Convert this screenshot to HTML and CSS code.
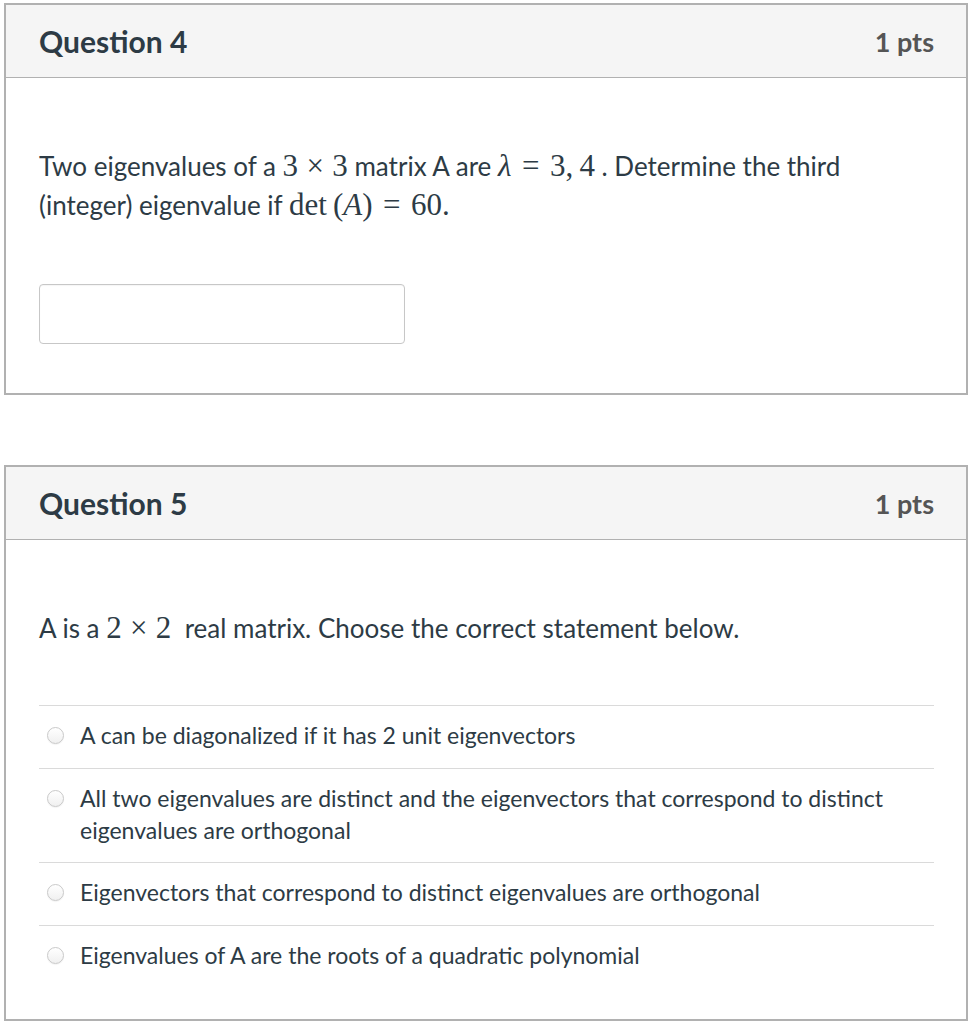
FILE: index.html
```html
<!DOCTYPE html>
<html>
<head>
<meta charset="utf-8">
<link rel="stylesheet" href="styles.css">
</head>
<body>
<div class="page">
  <div class="card">
    <div class="card-header">
      <h2 class="q-title">Question 4</h2>
      <span class="q-pts">1 pts</span>
    </div>
    <div class="card-body">
      <p class="q-text">Two eigenvalues of a <span class="math">3<span class="bin">×</span>3</span> matrix A are <span class="math"><i>λ</i><span class="rel">=</span>3,<span class="thin"></span>4</span> . Determine the third (integer) eigenvalue if <span class="math">det<span class="thin"></span>(<i>A</i>)<span class="rel">=</span>60.</span></p>
      <input class="answer" type="text">
    </div>
  </div>

  <div class="card card-second">
    <div class="card-header">
      <h2 class="q-title">Question 5</h2>
      <span class="q-pts">1 pts</span>
    </div>
    <div class="card-body card-body-mc">
      <p class="q-text">A is a <span class="math">2<span class="bin">×</span>2</span>&nbsp; real matrix. Choose the correct statement below.</p>
      <div class="answers">
        <label class="answer-row"><span class="radio"></span><span class="answer-text">A can be diagonalized if it has 2 unit eigenvectors</span></label>
        <label class="answer-row"><span class="radio"></span><span class="answer-text">All two eigenvalues are distinct and the eigenvectors that correspond to distinct eigenvalues are orthogonal</span></label>
        <label class="answer-row"><span class="radio"></span><span class="answer-text">Eigenvectors that correspond to distinct eigenvalues are orthogonal</span></label>
        <label class="answer-row"><span class="radio"></span><span class="answer-text">Eigenvalues of A are the roots of a quadratic polynomial</span></label>
      </div>
    </div>
  </div>
</div>
</body>
</html>
```

FILE: styles.css
```css
* { box-sizing: border-box; }
html, body { margin: 0; padding: 0; background: #fff; }
body { font-family: Lato, "Open Sans", sans-serif; color: #2d3b45; }

.page { padding: 3px 5px 0 4px; }

.card {
  border: 2px solid #b1b1b1;
  background: #fff;
}
.card-second { margin-top: 70px; }

.card-header {
  height: 73px;
  background: #f5f5f5;
  border-bottom: 1px solid #b1b1b1;
  display: flex;
  align-items: center;
  justify-content: space-between;
  padding: 0 32px 0 33px;
}
.q-title {
  margin: 0;
  font-size: 30px;
  font-weight: 700;
  color: #2d3b45;
}
.q-pts {
  font-size: 27px;
  font-weight: 700;
  color: #555;
}

.card-body { padding: 69px 32px 49px 33px; }
.card-body-mc { padding-bottom: 31px; }

.q-text {
  margin: 0;
  font-size: 26px;
  line-height: 39px;
}
.math {
  font-family: "Liberation Serif", "DejaVu Serif", serif;
  font-size: 31px;
  line-height: 1;
  white-space: nowrap;
}
.math i { font-style: italic; }
.bin { margin: 0 0.27em; }
.rel { margin: 0 0.34em; }
.thin { display: inline-block; width: 0.2em; }

.answer {
  display: block;
  margin-top: 59px;
  width: 366px;
  height: 60px;
  border: 1px solid #c7c7c7;
  border-radius: 4px;
  background: #fff;
  box-shadow: inset 0 1px 1px rgba(0,0,0,0.04);
}

.answers { margin-top: 57px; }
.answer-row {
  display: flex;
  align-items: flex-start;
  border-top: 1px solid #dadada;
  padding: 13px 0 17px;
}
.answer-row:nth-child(2) { padding-bottom: 16px; }
.radio {
  flex: none;
  width: 17px;
  height: 17px;
  margin: 8px 0 0 8px;
  border-radius: 50%;
  border: 1px solid #c9c9c9;
  background: linear-gradient(#ffffff, #f0f0f0);
  box-shadow: 0 1px 1px rgba(0,0,0,0.05);
}
.answer-text {
  margin-left: 16px;
  font-size: 23px;
  line-height: 32px;
}
```
